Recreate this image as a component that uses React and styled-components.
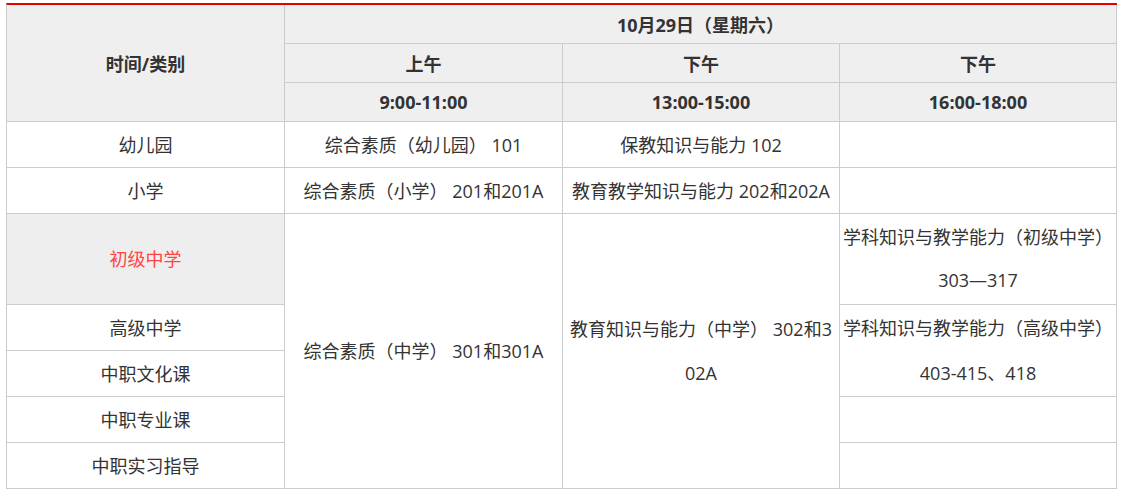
import React from "react";
import styled, { createGlobalStyle } from "styled-components";

const Global = createGlobalStyle`
  html, body { margin: 0; padding: 0; background: #fff; }
  body { font-family: "Open Sans", "Noto Sans CJK SC", "Noto Sans", sans-serif; color: #333; }
`;

const Page = styled.div`
  padding: 3px 0 0 6px;
`;

const Table = styled.table`
  width: 1111px;
  table-layout: fixed;
  border-collapse: separate;
  border-spacing: 0;
  border-top: 2px solid #e60000;
  border-left: 1px solid #ccc;
  font-size: 18px;
`;

const Head = styled.th`
  box-sizing: border-box;
  height: 39px;
  padding: 0 3px;
  background: #efefef;
  font-weight: bold;
  text-align: center;
  vertical-align: middle;
  border-right: 1px solid #ccc;
  border-bottom: 1px solid #ccc;
  color: #333;
`;

const Cell = styled.td`
  box-sizing: border-box;
  height: ${(p) => p.$h || 46}px;
  padding: 0 3px;
  text-align: center;
  vertical-align: middle;
  line-height: ${(p) => p.$lh || 44}px;
  word-break: break-all;
  border-right: 1px solid #ccc;
  border-bottom: 1px solid #ccc;
  background: ${(p) => (p.$shade ? "#eeeeee" : "#fff")};
  color: ${(p) => (p.$accent ? "#f44" : "#333")};
`;

const rows = [
  "幼儿园",
  "小学",
  "初级中学",
  "高级中学",
  "中职文化课",
  "中职专业课",
  "中职实习指导",
];

export default function App() {
  return (
    <>
      <Global />
      <Page>
        <Table>
          <colgroup>
            <col style={{ width: 278 }} />
            <col style={{ width: 278 }} />
            <col style={{ width: 277 }} />
            <col style={{ width: 277 }} />
          </colgroup>
          <thead>
            <tr>
              <Head rowSpan={3}>时间/类别</Head>
              <Head colSpan={3}>10月29日（星期六）</Head>
            </tr>
            <tr>
              <Head>上午</Head>
              <Head>下午</Head>
              <Head>下午</Head>
            </tr>
            <tr>
              <Head>9:00-11:00</Head>
              <Head>13:00-15:00</Head>
              <Head>16:00-18:00</Head>
            </tr>
          </thead>
          <tbody>
            <tr>
              <Cell>{rows[0]}</Cell>
              <Cell>综合素质（幼儿园）&nbsp;101</Cell>
              <Cell>保教知识与能力 102</Cell>
              <Cell />
            </tr>
            <tr>
              <Cell>{rows[1]}</Cell>
              <Cell>综合素质（小学）&nbsp;201和201A</Cell>
              <Cell>教育教学知识与能力 202和202A</Cell>
              <Cell />
            </tr>
            <tr>
              <Cell $h={91} $shade $accent>{rows[2]}</Cell>
              <Cell rowSpan={5}>综合素质（中学）&nbsp;301和301A</Cell>
              <Cell rowSpan={5}>教育知识与能力（中学）&nbsp;302和302A</Cell>
              <Cell $h={91} $lh={43}>学科知识与教学能力（初级中学）303—317</Cell>
            </tr>
            <tr>
              <Cell>{rows[3]}</Cell>
              <Cell rowSpan={2} $lh={45}>学科知识与教学能力（高级中学）403-415、418</Cell>
            </tr>
            <tr>
              <Cell>{rows[4]}</Cell>
            </tr>
            <tr>
              <Cell>{rows[5]}</Cell>
              <Cell />
            </tr>
            <tr>
              <Cell>{rows[6]}</Cell>
              <Cell />
            </tr>
          </tbody>
        </Table>
      </Page>
    </>
  );
}
